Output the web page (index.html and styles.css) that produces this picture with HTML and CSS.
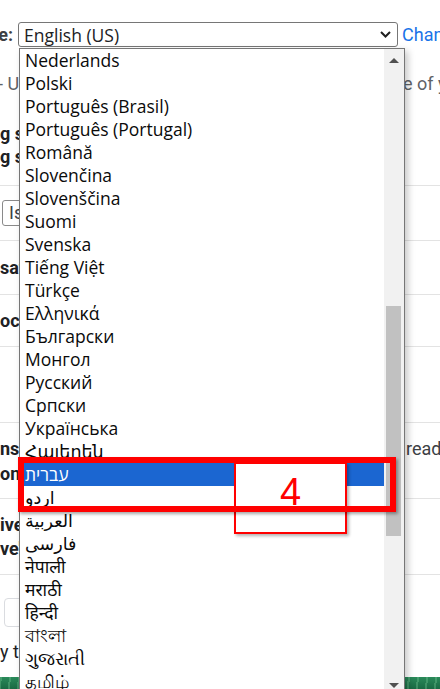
FILE: index.html
```html
<!DOCTYPE html>
<html lang="en">
<head>
<meta charset="utf-8">
<title>Language settings</title>
<link rel="stylesheet" href="styles.css">
</head>
<body>
<main class="page">
  <section class="sec sec-top">
    <div class="lang-row">
      <div class="tail-clip"><span class="label">e:</span></div>
      <div class="select">
        <span class="select-value">English (US)</span>
        <svg class="chev" width="11" height="7" viewBox="0 0 11 7"><path d="M1 1 L5.5 5.5 L10 1" fill="none" stroke="#1f1f1f" stroke-width="2"/></svg>
      </div>
      <a class="link" href="#">Chan</a>
    </div>
    <div class="row desc">
      <div class="lcell lead">- Us</div>
      <div class="rcell">e of y</div>
    </div>
    <div class="bold-lines">
      <div class="lcell strong">g s</div>
      <div class="lcell strong">g s</div>
    </div>
  </section>

  <section class="sec sec-field">
    <div class="field"><span class="lcell">Is</span></div>
  </section>

  <section class="sec sec-mid h54">
    <div class="lcell strong">sat</div>
  </section>

  <section class="sec sec-mid h52">
    <div class="lcell strong">oc</div>
  </section>

  <section class="sec h76"></section>

  <section class="sec sec-mid h76 lines25">
    <div class="row">
      <div class="lcell strong">ns</div>
      <div class="rcell read">read</div>
    </div>
    <div class="row">
      <div class="lcell strong">ons</div>
    </div>
  </section>

  <section class="sec sec-mid h76 lines24">
    <div class="lcell strong">ive</div>
    <div class="lcell strong">ve'</div>
  </section>

  <section class="sec-last">
    <div class="btn"></div>
    <div class="lcell plain">y te</div>
  </section>

  <div class="photo"></div>
</main>

<div class="dropdown">
  <ul class="options">
    <li class="opt">Nederlands</li>
    <li class="opt">Polski</li>
    <li class="opt">Português (Brasil)</li>
    <li class="opt">Português (Portugal)</li>
    <li class="opt">Română</li>
    <li class="opt">Slovenčina</li>
    <li class="opt">Slovenščina</li>
    <li class="opt">Suomi</li>
    <li class="opt">Svenska</li>
    <li class="opt">Tiếng Việt</li>
    <li class="opt">Türkçe</li>
    <li class="opt">Ελληνικά</li>
    <li class="opt">Български</li>
    <li class="opt">Монгол</li>
    <li class="opt">Русский</li>
    <li class="opt">Српски</li>
    <li class="opt">Українська</li>
    <li class="opt">Հայերեն</li>
    <li class="opt sel">עברית</li>
    <li class="opt">اردو</li>
    <li class="opt">العربية</li>
    <li class="opt">فارسی</li>
    <li class="opt">नेपाली</li>
    <li class="opt">मराठी</li>
    <li class="opt">हिन्दी</li>
    <li class="opt">বাংলা</li>
    <li class="opt">ગુજરાતી</li>
    <li class="opt">தமிழ்</li>
  </ul>
  <div class="scrollbar">
    <div class="sb-btn"><svg width="10" height="5" viewBox="0 0 10 5"><polygon points="0,5 5,0 10,5" fill="#505050"/></svg></div>
    <div class="thumb"></div>
    <div class="sb-btn sb-down"><svg width="10" height="5" viewBox="0 0 10 5"><polygon points="0,0 10,0 5,5" fill="#505050"/></svg></div>
  </div>
</div>

<div class="callout">4</div>
<div class="mark"></div>
</body>
</html>
```

FILE: styles.css
```css
* { box-sizing: border-box; }
html, body { margin: 0; padding: 0; }
body {
  width: 440px;
  height: 689px;
  overflow: hidden;
  position: relative;
  background: #fff;
  font-family: Roboto, "Liberation Sans", sans-serif;
  font-size: 18px;
  color: #3c4043;
}
.page { width: 440px; }

.sec { border-bottom: 1px solid #e3e3e3; }
.sec-top { height: 186px; padding-top: 22px; }

.lang-row { display: flex; align-items: center; height: 25px; }
.tail-clip {
  flex: none;
  width: 13px;
  overflow: hidden;
  display: flex;
  justify-content: flex-end;
}
.label { white-space: nowrap; font-weight: 700; color: #3c4043; }
.select {
  flex: none;
  margin-left: 5px;
  width: 380px;
  height: 25px;
  border: 1px solid #767676;
  border-radius: 3px;
  display: flex;
  align-items: center;
  justify-content: space-between;
  padding: 0 6px 0 5px;
  font-family: "Open Sans", sans-serif;
  font-size: 17.5px;
  color: #202124;
}
.chev { display: block; }
.link {
  margin-left: 4px;
  white-space: nowrap;
  color: #1a73e8;
  text-decoration: none;
}

.row { display: grid; grid-template-columns: 403px 1fr; }
.lcell { display: block; width: 19px; white-space: nowrap; overflow: hidden; }
.rcell { white-space: nowrap; overflow: hidden; }
.desc { margin-top: 26px; line-height: 22px; color: #5f6368; }
.lead { margin-left: -2px; width: 21px; }
.bold-lines { margin-top: 27px; line-height: 23px; }
.strong { font-weight: 700; color: #202124; }

.sec-field { height: 55px; padding-top: 14px; }
.field {
  margin-left: 2px;
  width: 200px;
  height: 26px;
  border: 1px solid #8a8a8a;
  border-radius: 3px;
  padding-left: 6px;
  line-height: 24px;
  color: #3c4043;
}
.field .lcell { width: 11px; }

.sec-mid { display: flex; flex-direction: column; justify-content: center; }
.h54 { height: 54px; }
.h52 { height: 52px; }
.h76 { height: 76px; }
.lines25 { line-height: 25px; }
.lines24 { line-height: 24px; }
.read { padding-left: 3px; color: #3c4043; }

.sec-last { height: 102px; padding-top: 23px; }
.btn {
  margin-left: 4px;
  width: 120px;
  height: 29px;
  border: 1px solid #dadce0;
  border-radius: 4px;
}
.plain { margin-top: 14px; line-height: 22px; color: #202124; }

.photo {
  height: 14px;
  background:
    repeating-linear-gradient(97deg, rgba(120,200,150,.35) 0 2px, transparent 2px 9px),
    linear-gradient(180deg, #2a8a5a, #17643f);
}

.dropdown {
  position: absolute;
  left: 19px;
  top: 48px;
  width: 386px;
  height: 649px;
  border: 1px solid #767676;
  background: #fff;
  display: flex;
  box-shadow: 3px 3px 7px rgba(0, 0, 0, .22);
  font-family: "Open Sans", "DejaVu Sans", "Noto Sans", sans-serif;
  font-size: 17.5px;
  color: #0a0a0a;
}
.options {
  flex: 1;
  list-style: none;
  margin: 0;
  padding: 0;
  overflow: hidden;
}
.opt {
  height: 23px;
  line-height: 23px;
  padding-left: 5px;
  white-space: nowrap;
}
.opt.sel { background: #1b66d1; color: #fff; }

.scrollbar {
  flex: none;
  width: 20px;
  background: #f1f1f1;
  display: flex;
  flex-direction: column;
}
.sb-btn {
  height: 22px;
  display: flex;
  align-items: center;
  justify-content: center;
}
.sb-btn svg { display: block; }
.sb-down { margin-top: auto; }
.thumb {
  margin: 235px 3px 0 2px;
  height: 230px;
  background: #c1c1c1;
}

.callout {
  position: absolute;
  left: 234px;
  top: 462px;
  width: 113px;
  height: 72px;
  border: 2px solid #ff0000;
  background: #fff;
  box-shadow: 2px 2px 3px rgba(0, 0, 0, .3);
  color: #ff0000;
  font-family: "Liberation Sans", Arial, sans-serif;
  font-size: 38px;
  line-height: 38px;
  text-align: center;
  padding-top: 9px;
}
.mark {
  position: absolute;
  left: 18px;
  top: 457px;
  width: 378px;
  height: 55px;
  border: 6px solid #ff0000;
  box-shadow: 2px 2px 3px rgba(0, 0, 0, .35);
}
```
